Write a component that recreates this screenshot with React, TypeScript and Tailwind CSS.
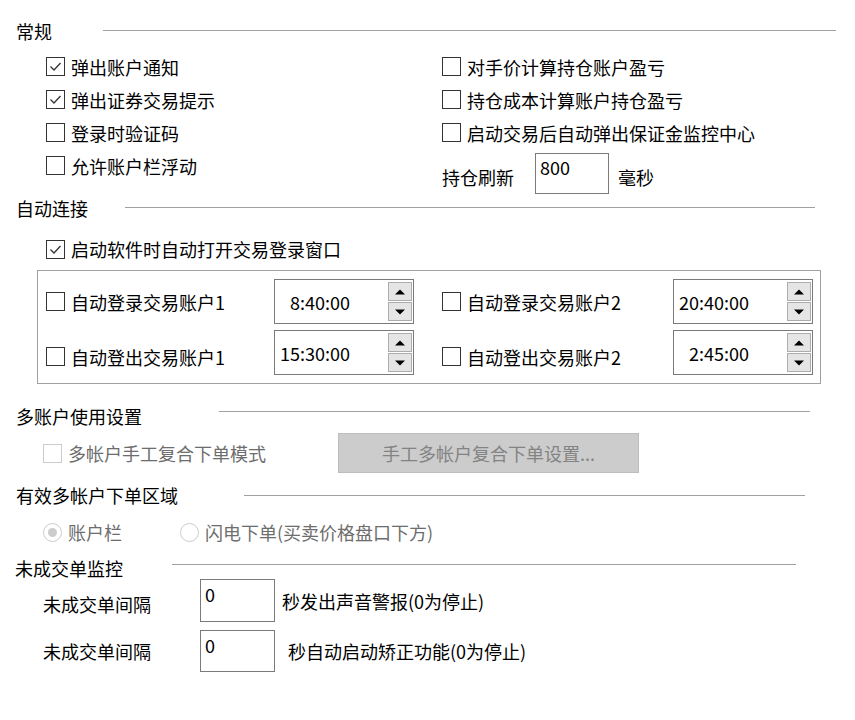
import React from "react";

const Check = ({ checked = false, disabled = false }: { checked?: boolean; disabled?: boolean }) => (
  <div
    className={`w-[19px] h-[19px] shrink-0 border bg-white flex items-center justify-center ${
      disabled ? "border-[#cccccc]" : "border-[#333333]"
    }`}
  >
    {checked && (
      <svg width="17" height="17" viewBox="0 0 17 17">
        <polyline points="3.5,8.5 7,12 13.5,5" fill="none" stroke="#333333" strokeWidth="1.3" />
      </svg>
    )}
  </div>
);

const CheckRow = ({ label, checked = false }: { label: string; checked?: boolean }) => (
  <div className="h-[33px] flex items-center gap-[6px]">
    <Check checked={checked} />
    <span className="leading-[24px] whitespace-nowrap">{label}</span>
  </div>
);

const Header = ({
  label,
  labelW,
  lineW,
  lineMt,
  cls,
}: {
  label: string;
  labelW: string;
  lineW: string;
  lineMt: string;
  cls: string;
}) => (
  <div className={`flex items-start shrink-0 ${cls}`}>
    <span className={`${labelW} whitespace-nowrap`}>{label}</span>
    <div className={`h-px bg-[#a0a0a0] ${lineW} ${lineMt}`} />
  </div>
);

const Tri = ({ up }: { up: boolean }) => (
  <svg width="10" height="6" viewBox="0 0 10 6">
    {up ? <polygon points="0,5.5 10,5.5 5,0.5" fill="#000" /> : <polygon points="0,0.5 10,0.5 5,5.5" fill="#000" />}
  </svg>
);

const Spin = ({ value }: { value: string }) => (
  <div className="w-[140px] h-[45px] shrink-0 border border-[#7a7a7a] bg-white flex">
    <div className="w-[75px] text-right self-center leading-[24px] whitespace-nowrap">{value}</div>
    <div className="flex-1" />
    <div className="flex flex-col pt-[2px] pr-[1px] gap-[1px]">
      <div className="w-[24px] h-[19px] border border-[#adadad] bg-[#e5e5e5] flex items-center justify-center">
        <Tri up />
      </div>
      <div className="w-[24px] h-[19px] border border-[#adadad] bg-[#e5e5e5] flex items-center justify-center">
        <Tri up={false} />
      </div>
    </div>
  </div>
);

const Radio = ({ selected = false }: { selected?: boolean }) => (
  <div className="w-[19px] h-[19px] shrink-0 rounded-full border border-[#cccccc] bg-white flex items-center justify-center">
    {selected && <div className="w-[9px] h-[9px] rounded-full bg-[#cccccc]" />}
  </div>
);

export default function App() {
  return (
    <div className="w-[855px] h-[720px] bg-white text-black text-[18px] font-['Noto_Sans_CJK_SC','Microsoft_YaHei',sans-serif] flex flex-col overflow-hidden">
      {/* 常规 */}
      <Header
        label="常规"
        labelW="w-[87px] leading-[24px]"
        lineW="w-[733px]"
        lineMt="mt-[11px]"
        cls="mt-[19px] h-[24px] pl-[16px]"
      />
      <div className="flex h-[146px] mt-[7px] shrink-0">
        <div className="w-[442px] pl-[46px] flex flex-col">
          <CheckRow label="弹出账户通知" checked />
          <CheckRow label="弹出证券交易提示" checked />
          <CheckRow label="登录时验证码" />
          <CheckRow label="允许账户栏浮动" />
        </div>
        <div className="flex flex-col">
          <CheckRow label="对手价计算持仓账户盈亏" />
          <CheckRow label="持仓成本计算账户持仓盈亏" />
          <CheckRow label="启动交易后自动弹出保证金监控中心" />
          <div className="mt-[4px] h-[41px] flex items-center">
            <span className="w-[93px] mt-[7px] leading-[24px]">持仓刷新</span>
            <div className="w-[74px] h-[41px] border border-[#7a7a7a] pl-[4px] pt-[1px] leading-[24px]">800</div>
            <span className="ml-[9px] mt-[7px] leading-[24px]">毫秒</span>
          </div>
        </div>
      </div>

      {/* 自动连接 */}
      <Header
        label="自动连接"
        labelW="w-[109px] leading-[24px]"
        lineW="w-[690px]"
        lineMt="mt-[11px]"
        cls="h-[24px] pl-[16px]"
      />
      <div className="mt-[12px] h-[34px] pl-[46px] flex items-center gap-[6px] shrink-0">
        <Check checked />
        <span className="leading-[24px]">启动软件时自动打开交易登录窗口</span>
      </div>
      <div className="mt-[4px] ml-[37px] w-[784px] h-[114px] border border-[#a0a0a0] pt-[8px] pl-[8px] flex flex-col gap-[6px] shrink-0">
        <div className="flex h-[45px] items-center">
          <div className="w-[228px] flex items-center gap-[6px]">
            <Check />
            <span className="leading-[24px]">自动登录交易账户1</span>
          </div>
          <Spin value="8:40:00" />
          <div className="w-[28px]" />
          <div className="w-[231px] flex items-center gap-[6px]">
            <Check />
            <span className="leading-[24px]">自动登录交易账户2</span>
          </div>
          <Spin value="20:40:00" />
        </div>
        <div className="flex h-[45px] items-center">
          <div className="w-[228px] flex items-center gap-[6px] pt-[8px]">
            <Check />
            <span className="leading-[24px]">自动登出交易账户1</span>
          </div>
          <Spin value="15:30:00" />
          <div className="w-[28px]" />
          <div className="w-[231px] flex items-center gap-[6px] pt-[8px]">
            <Check />
            <span className="leading-[24px]">自动登出交易账户2</span>
          </div>
          <Spin value="2:45:00" />
        </div>
      </div>

      {/* 多账户使用设置 */}
      <Header
        label="多账户使用设置"
        labelW="w-[203px] leading-[24px]"
        lineW="w-[591px]"
        lineMt="mt-[7px]"
        cls="mt-[20px] h-[24px] pl-[16px]"
      />
      <div className="mt-[5px] h-[40px] pl-[43px] flex items-center shrink-0">
        <div className="w-[295px] flex items-center gap-[6px]">
          <Check disabled />
          <span className="leading-[24px] text-[#6d6d6d]">多帐户手工复合下单模式</span>
        </div>
        <div className="w-[301px] h-[40px] border border-[#bdbdbd] bg-[#cccccc] flex items-center justify-center text-[#838383] leading-[24px]">
          手工多帐户复合下单设置...
        </div>
      </div>

      {/* 有效多帐户下单区域 */}
      <Header
        label="有效多帐户下单区域"
        labelW="w-[228px] leading-[24px]"
        lineW="w-[561px]"
        lineMt="mt-[12px]"
        cls="mt-[10px] h-[24px] pl-[16px]"
      />
      <div className="mt-[8px] h-[34px] pl-[43px] flex items-center shrink-0 text-[#6d6d6d]">
        <div className="w-[137px] flex items-center gap-[6px]">
          <Radio selected />
          <span className="leading-[24px]">账户栏</span>
        </div>
        <div className="flex items-center gap-[6px]">
          <Radio />
          <span className="leading-[24px]">闪电下单(买卖价格盘口下方)</span>
        </div>
      </div>

      {/* 未成交单监控 */}
      <Header
        label="未成交单监控"
        labelW="w-[157px] leading-[22px]"
        lineW="w-[624px]"
        lineMt="mt-[7px]"
        cls="mt-[8px] h-[22px] pl-[15px]"
      />
      <div className="h-[43px] pl-[43px] flex items-center shrink-0">
        <span className="w-[157px] mt-[7px] leading-[24px]">未成交单间隔</span>
        <div className="w-[75px] h-[43px] border border-[#7a7a7a] pl-[4px] pt-[2px] leading-[24px]">0</div>
        <span className="ml-[7px] leading-[24px]">秒发出声音警报(0为停止)</span>
      </div>
      <div className="mt-[8px] h-[42px] pl-[43px] flex items-center shrink-0">
        <span className="w-[157px] leading-[24px]">未成交单间隔</span>
        <div className="w-[75px] h-[42px] border border-[#7a7a7a] pl-[4px] pt-[2px] leading-[24px]">0</div>
        <span className="ml-[13px] leading-[24px]">秒自动启动矫正功能(0为停止)</span>
      </div>
    </div>
  );
}
